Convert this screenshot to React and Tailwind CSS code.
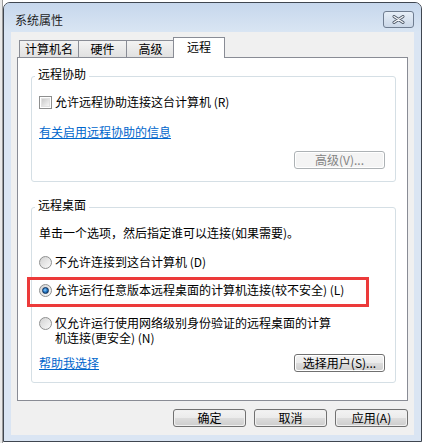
import React from 'react';

const FONT = "font-['Noto_Sans_CJK_SC','SimSun',sans-serif]";

function WinButton({ children, disabled, width = 'w-[73px]' }) {
  return (
    <div
      className={`${width} h-[18px] rounded-[3px] border p-px ${
        disabled ? 'border-[#adb2b5] text-[#838383]' : 'border-[#707070] text-black'
      }`}
    >
      <div
        className={`h-full rounded-[2px] flex items-center justify-center text-[12px] leading-[14px] ${
          disabled
            ? 'bg-[#f4f4f4]'
            : 'bg-[linear-gradient(#f2f2f2_0%,#ebebeb_50%,#dddddd_50%,#cfcfcf_100%)]'
        }`}
      >
        {children}
      </div>
    </div>
  );
}

function Checkbox() {
  return (
    <div className="w-[13px] h-[13px] border border-[#8e8f8f] bg-white p-px shrink-0">
      <div className="w-full h-full bg-[linear-gradient(135deg,#cbcbcb,#f6f6f6)] border border-[#e2e2e2]" />
    </div>
  );
}

function Radio({ checked }) {
  return (
    <div className="w-[13px] h-[13px] rounded-full border border-[#8e8f8f] bg-[linear-gradient(135deg,#d2d2d2,#fafafa)] flex items-center justify-center shrink-0">
      {checked && (
        <div className="w-[7px] h-[7px] rounded-full border border-[#0c2f5a] bg-[radial-gradient(circle_at_40%_40%,#8fd0ff_0%,#2a7cc9_45%,#0b3a6b_100%)]" />
      )}
    </div>
  );
}

function Tab({ label, className }) {
  return (
    <div
      className={`h-[17px] -ml-px first:ml-0 border border-b-0 border-[#898c95] bg-[linear-gradient(#f3f3f3,#e1e1e1)] flex items-center justify-center text-[12px] leading-[14px] text-black ${className}`}
    >
      {label}
    </div>
  );
}

export default function App() {
  return (
    <div className={`w-[422px] h-[443px] bg-white flex ${FONT} overflow-hidden`}>
      {/* sliver of window behind */}
      <div className="w-[3px] h-full bg-[#e9e9e9] border-r border-[#9a9a9a]" />

      <div className="mt-[2px] w-[419px] h-[440px] border border-[#3f4650] rounded-t-[7px] bg-[#dae5f3] flex flex-col">
        {/* title bar */}
        <div className="h-[29px] rounded-t-[6px] bg-[linear-gradient(#c6d7ec,#d9e5f3)] pt-[8px] pl-[11px] pr-[7px]">
          <div className="h-[17px] flex items-center justify-between">
            <span className="text-[12px] leading-[14px] text-[#1e1e1e]">系统属性</span>
            <div className="w-[31px] h-[17px] rounded-[3px] border border-[#6f7d90] bg-[linear-gradient(#e6eef7,#cbd8e8)] flex items-center justify-center">
              <svg width="13" height="9" viewBox="0 0 13 9">
                <path d="M2 1.5 L11 7.5 M11 1.5 L2 7.5" stroke="#4a5564" strokeWidth="3" strokeLinecap="round" />
                <path d="M2 1.5 L11 7.5 M11 1.5 L2 7.5" stroke="#f4f6f8" strokeWidth="1.4" strokeLinecap="round" />
              </svg>
            </div>
          </div>
        </div>

        {/* client */}
        <div className="mx-[7px] w-[403px] h-[403px] bg-[#f0f0f0] pt-[5px] pl-[6px]">
          {/* tabs */}
          <div className="flex items-end h-[20px] pl-[2px]">
            <Tab label="计算机名" className="w-[60px]" />
            <Tab label="硬件" className="w-[49px]" />
            <Tab label="高级" className="w-[49px]" />
            <div className="relative z-10 -ml-[2px] -mb-px w-[52px] h-[21px] border border-b-0 border-[#898c95] bg-white flex items-center justify-center pb-[2px] text-[12px] leading-[14px] text-black">
              远程
            </div>
          </div>

          {/* tab panel */}
          <div className="w-[391px] h-[344px] bg-white border border-[#898c95] pt-[9px] pl-[13px] text-[12px] leading-[14px] text-black">
            {/* remote assistance */}
            <fieldset className="w-[365px] border border-[#d5dfe5] rounded-[3px] pl-[7px] pr-[10px] pt-[10px] pb-[12px]">
              <legend className="-ml-[4px] px-[3px] pb-[4px] leading-[14px]">远程协助</legend>
              <div className="flex items-center gap-[3px] h-[14px]">
                <Checkbox />
                <span>允许远程协助连接这台计算机 (R)</span>
              </div>
              <div className="mt-[16px] h-[14px]">
                <span className="text-[#0066cc] underline">有关启用远程协助的信息</span>
              </div>
              <div className="mt-[12px] flex justify-end">
                <WinButton disabled width="w-[91px]">高级(V)...</WinButton>
              </div>
            </fieldset>

            {/* remote desktop */}
            <fieldset className="mt-[16px] w-[365px] border border-[#d5dfe5] rounded-[3px] pl-[7px] pr-[10px] pt-[10px] pb-[10px]">
              <legend className="-ml-[4px] px-[3px] pb-[4px] leading-[14px]">远程桌面</legend>
              <div className="h-[14px]">单击一个选项，然后指定谁可以连接(如果需要)。</div>

              <div className="mt-[15px] flex items-center gap-[3px] h-[14px]">
                <Radio />
                <span>不允许连接到这台计算机 (D)</span>
              </div>

              <div className="mt-[8px] -ml-[12px] w-[342px] h-[30px] border-[3px] border-[#ec3a3a] pt-[3px] pl-[9px]">
                <div className="flex items-center gap-[3px] h-[14px]">
                  <Radio checked />
                  <span>允许运行任意版本远程桌面的计算机连接(较不安全) (L)</span>
                </div>
              </div>

              <div className="mt-[9px] flex items-start gap-[3px]">
                <div className="mt-px">
                  <Radio />
                </div>
                <div className="flex flex-col">
                  <div className="h-[14px] leading-[13px]">仅允许运行使用网络级别身份验证的远程桌面的计算</div>
                  <div className="h-[14px] leading-[13px] pt-px">机连接(更安全) (N)</div>
                </div>
              </div>

              <div className="mt-[10px] flex items-center justify-between">
                <span className="text-[#0066cc] underline">帮助我选择</span>
                <WinButton width="w-[91px]">选择用户(S)...</WinButton>
              </div>
            </fieldset>
          </div>

          {/* dialog buttons */}
          <div className="mt-[8px] w-[391px] flex justify-end gap-[8px]">
            <WinButton>确定</WinButton>
            <WinButton>取消</WinButton>
            <WinButton>应用(A)</WinButton>
          </div>
        </div>
      </div>
    </div>
  );
}
